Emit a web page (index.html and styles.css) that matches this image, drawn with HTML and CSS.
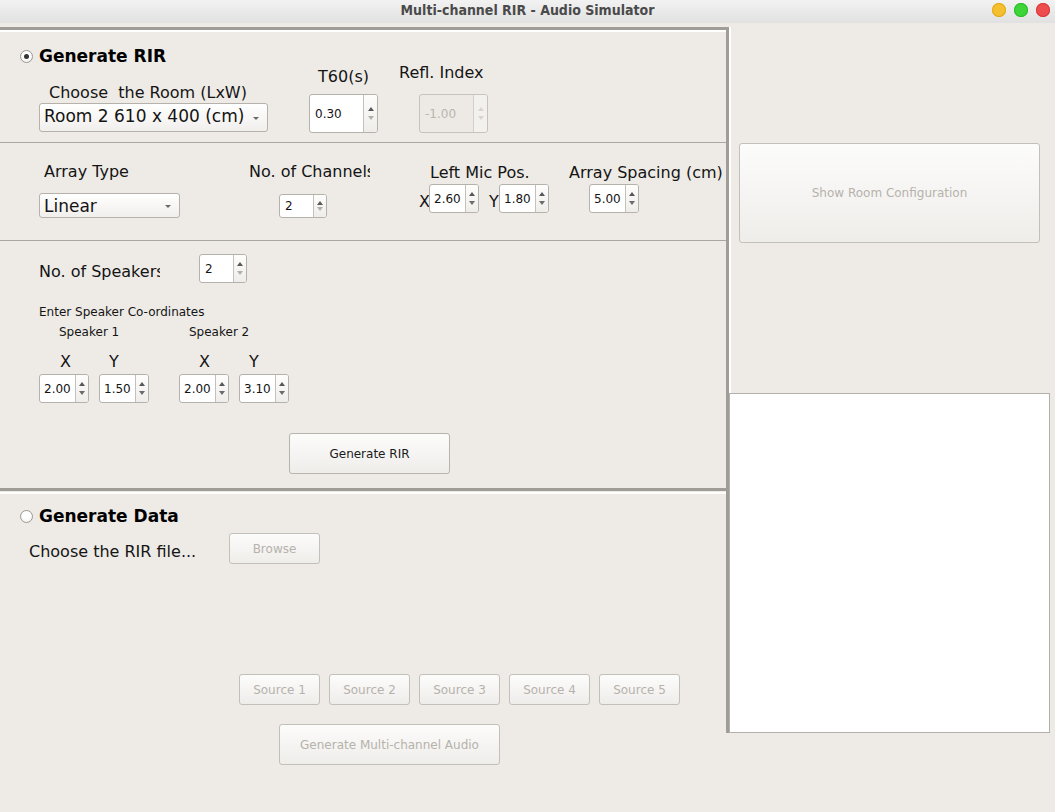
FILE: index.html
```html
<!DOCTYPE html>
<html>
<head>
<meta charset="utf-8">
<title>Multi-channel RIR - Audio Simulator</title>
<link rel="stylesheet" href="styles.css">
</head>
<body>
<div class="window">
  <div class="titlebar">
    <span></span>
    <span class="title">Multi-channel RIR - Audio Simulator</span>
    <span class="controls"><i class="dot yellow"></i><i class="dot green"></i><i class="dot red"></i></span>
  </div>
  <div class="content">
    <div class="left">
      <section class="sec sec-a">
        <div class="a-col1">
          <div class="header"><span class="radio on"></span><span class="htext">Generate RIR</span></div>
          <div class="lbl room-lbl">Choose&nbsp; the Room (LxW)</div>
          <div class="combo room-combo"><span>Room 2 610 x 400 (cm)</span><i class="caret"></i></div>
        </div>
        <div class="a-col2">
          <div class="lbl center">T60(s)</div>
          <div class="spin big"><span class="val">0.30</span><span class="arrows"><i class="up"></i><i class="dn light"></i></span></div>
        </div>
        <div class="a-col3">
          <div class="lbl">Refl. Index</div>
          <div class="spin big disabled"><span class="val">-1.00</span><span class="arrows"><i class="up"></i><i class="dn"></i></span></div>
        </div>
      </section>

      <section class="sec sec-b">
        <div class="b-col1">
          <div class="lbl ml5">Array Type</div>
          <div class="combo linear-combo"><span>Linear</span><i class="caret"></i></div>
        </div>
        <div class="b-col2">
          <div class="lbl clip">No. of Channels</div>
          <div class="spin small chan"><span class="val">2</span><span class="arrows"><i class="up"></i><i class="dn light"></i></span></div>
        </div>
        <div class="b-col3">
          <div class="lbl mic-lbl">Left Mic Pos.</div>
          <div class="mic-row">
            <span class="lbl axis">X</span>
            <div class="spin coord"><span class="val">2.60</span><span class="arrows"><i class="up"></i><i class="dn"></i></span></div>
            <span class="lbl axis ylab">Y</span>
            <div class="spin coord"><span class="val">1.80</span><span class="arrows"><i class="up"></i><i class="dn"></i></span></div>
          </div>
        </div>
        <div class="b-col4">
          <div class="lbl sp-lbl">Array Spacing (cm)</div>
          <div class="spin coord sp-spin"><span class="val">5.00</span><span class="arrows"><i class="up"></i><i class="dn"></i></span></div>
        </div>
      </section>

      <section class="sec sec-c">
        <div class="spk-row">
          <div class="lbl clip spk-lbl">No. of Speakers</div>
          <div class="spin spk-spin"><span class="val">2</span><span class="arrows"><i class="up"></i><i class="dn light"></i></span></div>
        </div>
        <div class="small-lbl coord-lbl">Enter Speaker Co-ordinates</div>
        <div class="speakers">
          <div class="group g1">
            <div class="small-lbl name">Speaker 1</div>
            <div class="xy">
              <div class="xycol"><div class="lbl xl">X</div><div class="spin coord"><span class="val">2.00</span><span class="arrows"><i class="up"></i><i class="dn"></i></span></div></div>
              <div class="xycol"><div class="lbl yl">Y</div><div class="spin coord"><span class="val">1.50</span><span class="arrows"><i class="up"></i><i class="dn"></i></span></div></div>
            </div>
          </div>
          <div class="group g2">
            <div class="small-lbl name">Speaker 2</div>
            <div class="xy">
              <div class="xycol"><div class="lbl xl">X</div><div class="spin coord"><span class="val">2.00</span><span class="arrows"><i class="up"></i><i class="dn"></i></span></div></div>
              <div class="xycol"><div class="lbl yl">Y</div><div class="spin coord"><span class="val">3.10</span><span class="arrows"><i class="up"></i><i class="dn"></i></span></div></div>
            </div>
          </div>
        </div>
        <button class="btn gen-rir">Generate RIR</button>
      </section>

      <section class="sec sec-d">
        <div class="header hd-d"><span class="radio"></span><span class="htext">Generate Data</span></div>
        <div class="file-row">
          <div class="lbl file-lbl">Choose the RIR file...</div>
          <button class="btn dis browse">Browse</button>
        </div>
        <div class="sources">
          <button class="btn dis src">Source 1</button>
          <button class="btn dis src">Source 2</button>
          <button class="btn dis src">Source 3</button>
          <button class="btn dis src">Source 4</button>
          <button class="btn dis src">Source 5</button>
        </div>
        <button class="btn dis multi">Generate Multi-channel Audio</button>
      </section>
    </div>

    <div class="right">
      <button class="btn dis show-room">Show Room Configuration</button>
      <div class="canvas"></div>
    </div>
  </div>
</div>
</body>
</html>
```

FILE: styles.css
```css
* { box-sizing: border-box; }
html, body { margin: 0; padding: 0; }
body {
  width: 1055px;
  height: 812px;
  overflow: hidden;
  background: #eeebe7;
  font-family: "DejaVu Sans", "Liberation Sans", sans-serif;
  color: #141414;
}

.titlebar {
  height: 23px;
  display: grid;
  grid-template-columns: 1fr auto 1fr;
  align-items: center;
  background: linear-gradient(#f2f2f2, #e1e1e1);
}
.title {
  font-family: "DejaVu Sans Condensed", "DejaVu Sans", sans-serif;
  font-stretch: condensed;
  font-weight: bold;
  font-size: 14px;
  line-height: 21px;
  color: #4a4a4a;
  padding-bottom: 2px;
}
.controls {
  justify-self: end;
  display: flex;
  gap: 8px;
  padding-right: 5px;
  padding-bottom: 3px;
}
.dot {
  width: 14px;
  height: 14px;
  border-radius: 50%;
  display: block;
}
.yellow { background: #f5bf2f; box-shadow: inset 0 0 0 1px #e0a91b; }
.green { background: #3ed53a; box-shadow: inset 0 0 0 1px #2cbb28; }
.red { background: #ee4d4d; box-shadow: inset 0 0 0 1px #d83a3a; }

.content {
  display: flex;
  margin-top: 4px;
}

.left {
  width: 729px;
  height: 706px;
  border-top: 3px solid #a09d98;
  border-right: 3px solid #a09d98;
  display: flex;
  flex-direction: column;
}
.sec { display: flex; flex-shrink: 0; }
.sec-a {
  height: 113px;
  border-top: 2px solid #ffffff;
  border-bottom: 1px solid #aaa7a1;
}
.sec-b {
  height: 98px;
  border-bottom: 1px solid #aaa7a1;
}
.sec-c {
  height: 250px;
  border-bottom: 3px solid #a09d98;
  flex-direction: column;
  align-items: flex-start;
}
.sec-d {
  flex: 1;
  margin-top: 1px;
  border-top: 2px solid #ffffff;
  flex-direction: column;
  align-items: flex-start;
}

.lbl {
  font-size: 16px;
  line-height: 19px;
  white-space: nowrap;
}
.small-lbl {
  font-size: 12px;
  line-height: 15px;
  white-space: nowrap;
}
.center { text-align: center; }
.clip { width: 121px; overflow: hidden; }

.header {
  display: flex;
  align-items: center;
  gap: 6px;
  height: 20px;
}
.htext {
  font-weight: bold;
  font-size: 17px;
  line-height: 20px;
  color: #000;
}
.radio {
  width: 13px;
  height: 13px;
  border-radius: 50%;
  border: 1px solid #9c9892;
  background: radial-gradient(circle at 50% 35%, #ffffff 40%, #ebe9e5 100%);
  display: flex;
  align-items: center;
  justify-content: center;
}
.radio.on::after {
  content: "";
  width: 5px;
  height: 5px;
  border-radius: 50%;
  background: #353535;
}

/* combo box */
.combo {
  display: flex;
  align-items: center;
  justify-content: space-between;
  border: 1px solid #b5b1ab;
  border-radius: 3px;
  background: linear-gradient(#ffffff, #f1efec);
  font-size: 17px;
  padding: 0 8px 0 4px;
  white-space: nowrap;
}
.combo span { line-height: 20px; }
.caret {
  width: 0;
  height: 0;
  border-left: 3px solid transparent;
  border-right: 3px solid transparent;
  border-top: 3px solid #6a6a6a;
  margin-top: 2px;
}

/* spinner */
.spin {
  display: flex;
  border: 1px solid #b5b1ab;
  border-radius: 3px;
  background: #ffffff;
  overflow: hidden;
}
.spin .val {
  flex: 1;
  display: flex;
  align-items: center;
  padding-left: 4px;
  font-size: 12px;
  line-height: 14px;
  color: #141414;
}
.spin .arrows {
  width: 13px;
  border-left: 1px solid #c4c0ba;
  background: linear-gradient(#fdfdfc, #efedea);
  display: flex;
  flex-direction: column;
  align-items: center;
  justify-content: space-evenly;
  padding: 3px 0;
}
.up, .dn {
  width: 0;
  height: 0;
  border-left: 3.5px solid transparent;
  border-right: 3.5px solid transparent;
}
.up { border-bottom: 4px solid #575757; }
.dn { border-top: 4px solid #6b6b6b; }
.dn.light { border-top-color: #b3b0ab; }
.spin.disabled {
  background: #edeae6;
  border-color: #c6c2bc;
}
.spin.disabled .val { color: #b9b5af; }
.spin.disabled .arrows { background: #f3f1ee; border-left-color: #d3d0ca; }
.spin.disabled .up { border-bottom-color: #d9d6d1; }
.spin.disabled .dn { border-top-color: #d9d6d1; }

/* buttons */
.btn {
  font-family: "DejaVu Sans", "Liberation Sans", sans-serif;
  font-size: 12px;
  color: #1a1a1a;
  border: 1px solid #b7b3ad;
  border-radius: 3px;
  background: linear-gradient(#fcfcfb, #efedea);
  padding: 0;
  margin: 0;
}
.btn.dis {
  color: #b6b2ac;
  border-color: #c3bfb9;
}

/* section A */
.a-col1 { margin-left: 20px; width: 248px; }
.a-col1 .header { margin-top: 14px; }
.room-lbl { margin-top: 17px; margin-left: 29px; }
.room-combo { margin-top: 1px; margin-left: 19px; width: 229px; height: 29px; }
.room-combo span { padding-bottom: 3px; }
.a-col2 { margin-left: 41px; width: 69px; }
.a-col2 .lbl { margin-top: 35px; }
.spin.big { width: 69px; height: 39px; margin-top: 8px; }
.spin.big .val { padding-left: 5px; }
.spin.big .arrows { width: 14px; padding: 6px 0; }
.a-col3 { margin-left: 21px; }
.a-col3 .lbl { margin-top: 31px; }
.a-col3 .spin.big { margin-top: 12px; margin-left: 20px; }

/* section B */
.b-col1 { margin-left: 39px; width: 141px; }
.b-col1 .lbl { margin-top: 19px; }
.ml5 { margin-left: 5px; }
.linear-combo { margin-top: 12px; width: 141px; height: 25px; }
.b-col2 { margin-left: 69px; width: 121px; }
.b-col2 .lbl { margin-top: 19px; }
.spin.chan { margin-top: 13px; margin-left: 30px; width: 48px; height: 24px; }
.spin.chan .val { padding-left: 5px; }
.b-col3 { margin-left: 49px; width: 130px; }
.mic-lbl { margin-top: 20px; margin-left: 11px; }
.mic-row { display: flex; align-items: flex-start; margin-top: 2px; }
.axis { width: 10px; margin-top: 8px; }
.ylab { margin-left: 10px; }
.spin.coord { width: 50px; height: 29px; }
.b-col4 { margin-left: 20px; }
.sp-lbl { margin-top: 20px; }
.sp-spin { margin-top: 2px; margin-left: 20px; }

/* section C */
.spk-row { display: flex; align-items: flex-start; margin-top: 13px; margin-left: 39px; }
.spk-lbl { margin-top: 8px; }
.spin.spk-spin { margin-left: 39px; width: 48px; height: 29px; }
.spin.spk-spin .val { padding-left: 5px; }
.coord-lbl { margin-top: 22px; margin-left: 39px; }
.speakers { display: flex; gap: 30px; margin-top: 5px; margin-left: 39px; }
.group { width: 110px; }
.g1 .name { margin-left: 20px; }
.g2 .name { margin-left: 10px; }
.xy { display: flex; gap: 10px; margin-top: 12px; }
.xycol { width: 50px; }
.g1 .xl { margin-left: 21px; }
.g2 .xl { margin-left: 20px; }
.yl { margin-left: 10px; }
.xycol .spin { margin-top: 3px; }
.gen-rir { margin-top: 30px; margin-left: 289px; width: 161px; height: 41px; }

/* section D */
.hd-d { margin-top: 12px; margin-left: 20px; }
.file-row { display: flex; align-items: flex-start; margin-top: 7px; margin-left: 29px; }
.file-lbl { width: 200px; margin-top: 9px; }
.browse { width: 91px; height: 31px; }
.sources { display: flex; gap: 9px; margin-top: 110px; margin-left: 239px; }
.src { width: 81px; height: 31px; }
.multi { margin-top: 19px; margin-left: 279px; width: 221px; height: 41px; }

/* right panel */
.right {
  width: 326px;
  height: 706px;
  display: flex;
  flex-direction: column;
  align-items: flex-start;
  box-shadow: inset 2px 0 0 #ffffff;
}
.show-room { margin-top: 116px; margin-left: 10px; width: 301px; height: 100px; }
.canvas {
  margin-top: 150px;
  width: 321px;
  height: 341px;
  background: #ffffff;
  border: 1px solid #b3b0ab;
}
```
